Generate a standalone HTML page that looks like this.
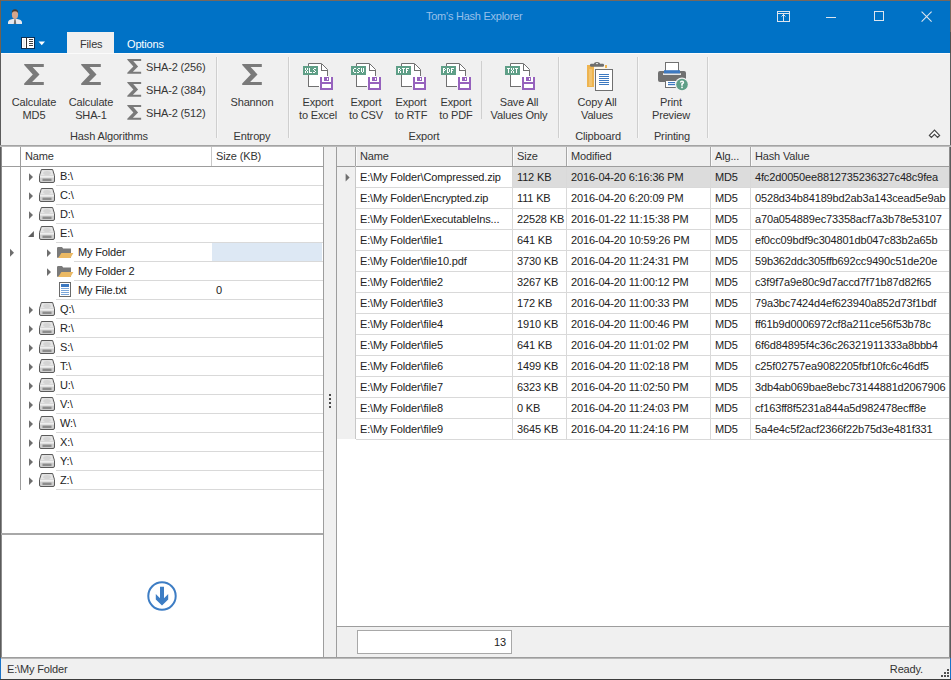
<!DOCTYPE html>
<html><head><meta charset="utf-8"><style>
*{margin:0;padding:0;box-sizing:border-box}
html,body{width:951px;height:680px;overflow:hidden;background:#f0f0f0}
body{position:relative;font-family:"Liberation Sans",sans-serif;font-size:11px;color:#222;line-height:13px}
.a{position:absolute}
.t{position:absolute;white-space:nowrap;letter-spacing:-0.15px}
</style></head><body>
<div class="a" style="left:0px;top:0px;width:951px;height:53px;background:#0072c6;"></div>
<div class="a" style="left:0px;top:0px;width:951px;height:1px;background:#76675c;"></div>
<div class="a" style="left:0px;top:0px;width:1px;height:53px;background:#73614f;"></div>
<div class="a" style="left:950px;top:0px;width:1px;height:32px;background:#76675c;"></div>
<div class="a" style="left:950px;top:32px;width:1px;height:21px;background:#4f4f4f;"></div>
<svg class="a" style="left:6px;top:7px" width="18" height="18" viewBox="0 0 18 18"><path d="M2 17 V14.8 Q2.6 12.6 6.6 11.9 H11.4 Q15.4 12.6 16 14.8 V17Z" fill="#e6e8ee"/><path d="M8.3 12.2 H9.7 L10.2 17 H7.8Z" fill="#707070"/><ellipse cx="9" cy="7.4" rx="3.1" ry="4.5" fill="#d6a68c"/><path d="M5.8 6.2 Q5.6 2.3 9 2.3 Q12.4 2.3 12.2 6.2 Q11.6 4.3 9 4.3 Q6.4 4.3 5.8 6.2Z" fill="#4a3a30"/></svg>
<div class="t" style="left:426px;top:10px;color:#98c0ea;letter-spacing:-0.25px;">Tom's Hash Explorer</div>
<svg class="a" style="left:777px;top:11px" width="14" height="12" viewBox="0 0 14 12" shape-rendering="crispEdges"><rect x="0.5" y="0.5" width="12" height="10" fill="none" stroke="#dde5ee"/><line x1="1" y1="2.5" x2="12" y2="2.5" stroke="#dde5ee"/><line x1="6.5" y1="3" x2="6.5" y2="11" stroke="#dde5ee"/><path d="M4.5 5.5 L6.5 3.5 L8.5 5.5" fill="none" stroke="#dde5ee" shape-rendering="auto"/></svg>
<div class="a" style="left:826px;top:17px;width:10px;height:1px;background:#dde5ee;"></div>
<svg class="a" style="left:874px;top:11px" width="10" height="10" viewBox="0 0 10 10" shape-rendering="crispEdges"><rect x="0.5" y="0.5" width="9" height="9" fill="none" stroke="#dde5ee"/></svg>
<svg class="a" style="left:921px;top:11px" width="12" height="12" viewBox="0 0 12 12"><path d="M0.6 0.6 L10.6 10.6 M10.6 0.6 L0.6 10.6" stroke="#dde5ee" stroke-width="1.1"/></svg>
<svg class="a" style="left:20px;top:36px" width="16" height="14" viewBox="0 0 16 14" shape-rendering="crispEdges"><rect x="1" y="1" width="14" height="12" rx="1.5" fill="#0a2f55"/><rect x="1.6" y="1.6" width="12.8" height="10.8" rx="1" fill="#ffffff"/><rect x="3" y="3" width="2" height="8" fill="#ececec"/><rect x="6" y="1" width="1" height="12" fill="#333"/><rect x="9" y="3" width="4" height="1" fill="#444"/><rect x="9" y="5" width="4" height="1" fill="#444"/><rect x="9" y="7" width="4" height="1" fill="#444"/><rect x="9" y="9" width="4" height="1" fill="#444"/></svg>
<svg class="a" style="left:38px;top:41px" width="8" height="5" viewBox="0 0 8 5"><path d="M0.5 0.5 L7 0.5 L3.75 4.2Z" fill="#fff"/></svg>
<div class="a" style="left:67px;top:32px;width:47px;height:21px;background:#f0f0f0;"></div>
<div class="t" style="left:80px;top:38px;color:#363636;">Files</div>
<div class="t" style="left:127px;top:38px;color:#ffffff;">Options</div>
<div class="a" style="left:0px;top:53px;width:951px;height:92px;background:#f0f0f0;"></div>
<div class="a" style="left:1px;top:53px;width:949px;height:1px;background:#fbfbfb;"></div>
<div class="a" style="left:0px;top:53px;width:1px;height:627px;background:#5b5b5b;"></div>
<div class="a" style="left:950px;top:53px;width:1px;height:605px;background:#5b5b5b;"></div>
<div class="a" style="left:0px;top:145px;width:951px;height:1px;background:#a4a4a4;"></div>
<div class="a" style="left:0px;top:146px;width:951px;height:1px;background:#bcbcbc;"></div>
<svg class="a" style="left:24px;top:64px" width="20" height="21" viewBox="-0.2 0 20 21"><path d="M0 0 H19.6 V3 H8.4 L15.3 10.5 L7.9 18 H19.6 V21 H0 V19.4 L8.6 10.5 L0 0.9Z" fill="#7a7a7a"/></svg>
<svg class="a" style="left:81px;top:64px" width="20" height="21" viewBox="-0.2 0 20 21"><path d="M0 0 H19.6 V3 H8.4 L15.3 10.5 L7.9 18 H19.6 V21 H0 V19.4 L8.6 10.5 L0 0.9Z" fill="#7a7a7a"/></svg>
<div class="t" style="left:-66px;top:96px;width:200px;text-align:center;color:#363636;">Calculate</div>
<div class="t" style="left:-66px;top:109px;width:200px;text-align:center;color:#363636;">MD5</div>
<div class="t" style="left:-9px;top:96px;width:200px;text-align:center;color:#363636;">Calculate</div>
<div class="t" style="left:-9px;top:109px;width:200px;text-align:center;color:#363636;">SHA-1</div>
<svg class="a" style="left:127px;top:59px" width="15" height="16" viewBox="-0.2 0 20.8 22.6"><path d="M0 0 H19.6 V3 H8.4 L15.3 10.5 L7.9 18 H19.6 V21 H0 V19.4 L8.6 10.5 L0 0.9Z" fill="#7a7a7a"/></svg>
<svg class="a" style="left:127px;top:82px" width="15" height="16" viewBox="-0.2 0 20.8 22.6"><path d="M0 0 H19.6 V3 H8.4 L15.3 10.5 L7.9 18 H19.6 V21 H0 V19.4 L8.6 10.5 L0 0.9Z" fill="#7a7a7a"/></svg>
<svg class="a" style="left:127px;top:105px" width="15" height="16" viewBox="-0.2 0 20.8 22.6"><path d="M0 0 H19.6 V3 H8.4 L15.3 10.5 L7.9 18 H19.6 V21 H0 V19.4 L8.6 10.5 L0 0.9Z" fill="#7a7a7a"/></svg>
<div class="t" style="left:146px;top:61px;color:#363636;">SHA-2 (256)</div>
<div class="t" style="left:146px;top:84px;color:#363636;">SHA-2 (384)</div>
<div class="t" style="left:146px;top:107px;color:#363636;">SHA-2 (512)</div>
<div class="t" style="left:9px;top:130px;width:200px;text-align:center;color:#363636;">Hash Algorithms</div>
<div class="a" style="left:216px;top:57px;width:1px;height:81px;background:#cfcfcf;"></div>
<div class="a" style="left:217px;top:57px;width:1px;height:81px;background:#f7f7f7;"></div>
<svg class="a" style="left:242px;top:64px" width="20" height="21" viewBox="-0.2 0 20 21"><path d="M0 0 H19.6 V3 H8.4 L15.3 10.5 L7.9 18 H19.6 V21 H0 V19.4 L8.6 10.5 L0 0.9Z" fill="#7a7a7a"/></svg>
<div class="t" style="left:152px;top:96px;width:200px;text-align:center;color:#363636;">Shannon</div>
<div class="t" style="left:152px;top:130px;width:200px;text-align:center;color:#363636;">Entropy</div>
<div class="a" style="left:288px;top:57px;width:1px;height:81px;background:#cfcfcf;"></div>
<div class="a" style="left:289px;top:57px;width:1px;height:81px;background:#f7f7f7;"></div>
<svg class="a" style="left:298px;top:60px" width="40" height="32" viewBox="0 0 40 32" shape-rendering="crispEdges"><path d="M10 3.5 H23 L29.5 10 V29" fill="#fff" stroke="none"/><rect x="10" y="3" width="13" height="24" fill="#fff"/><rect x="10" y="10" width="20" height="17" fill="#fff"/><path d="M23 3 L30 10 H23Z" fill="#fff"/><path d="M10.5 6 V3.5 H23.5 L29.5 9.5 V16" fill="none" stroke="#707070" stroke-width="1" shape-rendering="auto"/><path d="M23.5 3.5 V10.5 H29.5" fill="none" stroke="#707070"/><path d="M10.5 15 V26.5 H21" fill="none" stroke="#707070"/><rect x="5" y="6" width="15" height="9" fill="#5f9f87"/><rect x="22" y="17" width="13" height="13" fill="#9662bd"/><rect x="24" y="17" width="9" height="5" fill="#fff"/><rect x="26" y="17" width="5" height="4" fill="#9662bd"/><rect x="29" y="18" width="1" height="2" fill="#fff"/><rect x="24" y="24" width="9" height="4" fill="#fff"/></svg>
<svg class="a" style="left:303px;top:66px" width="15" height="9" viewBox="0 0 15 9" shape-rendering="crispEdges"><g fill="#fff"><rect x="2" y="2" width="1" height="1"/><rect x="4" y="2" width="1" height="1"/><rect x="2" y="3" width="1" height="1"/><rect x="4" y="3" width="1" height="1"/><rect x="3" y="4" width="1" height="1"/><rect x="2" y="5" width="1" height="1"/><rect x="4" y="5" width="1" height="1"/><rect x="2" y="6" width="1" height="1"/><rect x="4" y="6" width="1" height="1"/><rect x="6" y="2" width="1" height="1"/><rect x="6" y="3" width="1" height="1"/><rect x="6" y="4" width="1" height="1"/><rect x="6" y="5" width="1" height="1"/><rect x="6" y="6" width="1" height="1"/><rect x="7" y="6" width="1" height="1"/><rect x="8" y="6" width="1" height="1"/><rect x="11" y="2" width="1" height="1"/><rect x="12" y="2" width="1" height="1"/><rect x="10" y="3" width="1" height="1"/><rect x="11" y="4" width="1" height="1"/><rect x="12" y="5" width="1" height="1"/><rect x="10" y="6" width="1" height="1"/><rect x="11" y="6" width="1" height="1"/></g></svg>
<svg class="a" style="left:346px;top:60px" width="40" height="32" viewBox="0 0 40 32" shape-rendering="crispEdges"><path d="M10 3.5 H23 L29.5 10 V29" fill="#fff" stroke="none"/><rect x="10" y="3" width="13" height="24" fill="#fff"/><rect x="10" y="10" width="20" height="17" fill="#fff"/><path d="M23 3 L30 10 H23Z" fill="#fff"/><path d="M10.5 6 V3.5 H23.5 L29.5 9.5 V16" fill="none" stroke="#707070" stroke-width="1" shape-rendering="auto"/><path d="M23.5 3.5 V10.5 H29.5" fill="none" stroke="#707070"/><path d="M10.5 15 V26.5 H21" fill="none" stroke="#707070"/><rect x="5" y="6" width="15" height="9" fill="#5f9f87"/><rect x="22" y="17" width="13" height="13" fill="#9662bd"/><rect x="24" y="17" width="9" height="5" fill="#fff"/><rect x="26" y="17" width="5" height="4" fill="#9662bd"/><rect x="29" y="18" width="1" height="2" fill="#fff"/><rect x="24" y="24" width="9" height="4" fill="#fff"/></svg>
<svg class="a" style="left:351px;top:66px" width="15" height="9" viewBox="0 0 15 9" shape-rendering="crispEdges"><g fill="#fff"><rect x="3" y="2" width="1" height="1"/><rect x="4" y="2" width="1" height="1"/><rect x="2" y="3" width="1" height="1"/><rect x="2" y="4" width="1" height="1"/><rect x="2" y="5" width="1" height="1"/><rect x="3" y="6" width="1" height="1"/><rect x="4" y="6" width="1" height="1"/><rect x="7" y="2" width="1" height="1"/><rect x="8" y="2" width="1" height="1"/><rect x="6" y="3" width="1" height="1"/><rect x="7" y="4" width="1" height="1"/><rect x="8" y="5" width="1" height="1"/><rect x="6" y="6" width="1" height="1"/><rect x="7" y="6" width="1" height="1"/><rect x="10" y="2" width="1" height="1"/><rect x="12" y="2" width="1" height="1"/><rect x="10" y="3" width="1" height="1"/><rect x="12" y="3" width="1" height="1"/><rect x="10" y="4" width="1" height="1"/><rect x="12" y="4" width="1" height="1"/><rect x="10" y="5" width="1" height="1"/><rect x="12" y="5" width="1" height="1"/><rect x="11" y="6" width="1" height="1"/></g></svg>
<svg class="a" style="left:391px;top:60px" width="40" height="32" viewBox="0 0 40 32" shape-rendering="crispEdges"><path d="M10 3.5 H23 L29.5 10 V29" fill="#fff" stroke="none"/><rect x="10" y="3" width="13" height="24" fill="#fff"/><rect x="10" y="10" width="20" height="17" fill="#fff"/><path d="M23 3 L30 10 H23Z" fill="#fff"/><path d="M10.5 6 V3.5 H23.5 L29.5 9.5 V16" fill="none" stroke="#707070" stroke-width="1" shape-rendering="auto"/><path d="M23.5 3.5 V10.5 H29.5" fill="none" stroke="#707070"/><path d="M10.5 15 V26.5 H21" fill="none" stroke="#707070"/><rect x="5" y="6" width="15" height="9" fill="#5f9f87"/><rect x="22" y="17" width="13" height="13" fill="#9662bd"/><rect x="24" y="17" width="9" height="5" fill="#fff"/><rect x="26" y="17" width="5" height="4" fill="#9662bd"/><rect x="29" y="18" width="1" height="2" fill="#fff"/><rect x="24" y="24" width="9" height="4" fill="#fff"/></svg>
<svg class="a" style="left:396px;top:66px" width="15" height="9" viewBox="0 0 15 9" shape-rendering="crispEdges"><g fill="#fff"><rect x="2" y="2" width="1" height="1"/><rect x="3" y="2" width="1" height="1"/><rect x="2" y="3" width="1" height="1"/><rect x="4" y="3" width="1" height="1"/><rect x="2" y="4" width="1" height="1"/><rect x="3" y="4" width="1" height="1"/><rect x="2" y="5" width="1" height="1"/><rect x="4" y="5" width="1" height="1"/><rect x="2" y="6" width="1" height="1"/><rect x="4" y="6" width="1" height="1"/><rect x="6" y="2" width="1" height="1"/><rect x="7" y="2" width="1" height="1"/><rect x="8" y="2" width="1" height="1"/><rect x="7" y="3" width="1" height="1"/><rect x="7" y="4" width="1" height="1"/><rect x="7" y="5" width="1" height="1"/><rect x="7" y="6" width="1" height="1"/><rect x="10" y="2" width="1" height="1"/><rect x="11" y="2" width="1" height="1"/><rect x="12" y="2" width="1" height="1"/><rect x="10" y="3" width="1" height="1"/><rect x="10" y="4" width="1" height="1"/><rect x="11" y="4" width="1" height="1"/><rect x="10" y="5" width="1" height="1"/><rect x="10" y="6" width="1" height="1"/></g></svg>
<svg class="a" style="left:436px;top:60px" width="40" height="32" viewBox="0 0 40 32" shape-rendering="crispEdges"><path d="M10 3.5 H23 L29.5 10 V29" fill="#fff" stroke="none"/><rect x="10" y="3" width="13" height="24" fill="#fff"/><rect x="10" y="10" width="20" height="17" fill="#fff"/><path d="M23 3 L30 10 H23Z" fill="#fff"/><path d="M10.5 6 V3.5 H23.5 L29.5 9.5 V16" fill="none" stroke="#707070" stroke-width="1" shape-rendering="auto"/><path d="M23.5 3.5 V10.5 H29.5" fill="none" stroke="#707070"/><path d="M10.5 15 V26.5 H21" fill="none" stroke="#707070"/><rect x="5" y="6" width="15" height="9" fill="#5f9f87"/><rect x="22" y="17" width="13" height="13" fill="#9662bd"/><rect x="24" y="17" width="9" height="5" fill="#fff"/><rect x="26" y="17" width="5" height="4" fill="#9662bd"/><rect x="29" y="18" width="1" height="2" fill="#fff"/><rect x="24" y="24" width="9" height="4" fill="#fff"/></svg>
<svg class="a" style="left:441px;top:66px" width="15" height="9" viewBox="0 0 15 9" shape-rendering="crispEdges"><g fill="#fff"><rect x="2" y="2" width="1" height="1"/><rect x="3" y="2" width="1" height="1"/><rect x="2" y="3" width="1" height="1"/><rect x="4" y="3" width="1" height="1"/><rect x="2" y="4" width="1" height="1"/><rect x="3" y="4" width="1" height="1"/><rect x="2" y="5" width="1" height="1"/><rect x="2" y="6" width="1" height="1"/><rect x="6" y="2" width="1" height="1"/><rect x="7" y="2" width="1" height="1"/><rect x="6" y="3" width="1" height="1"/><rect x="8" y="3" width="1" height="1"/><rect x="6" y="4" width="1" height="1"/><rect x="8" y="4" width="1" height="1"/><rect x="6" y="5" width="1" height="1"/><rect x="8" y="5" width="1" height="1"/><rect x="6" y="6" width="1" height="1"/><rect x="7" y="6" width="1" height="1"/><rect x="10" y="2" width="1" height="1"/><rect x="11" y="2" width="1" height="1"/><rect x="12" y="2" width="1" height="1"/><rect x="10" y="3" width="1" height="1"/><rect x="10" y="4" width="1" height="1"/><rect x="11" y="4" width="1" height="1"/><rect x="10" y="5" width="1" height="1"/><rect x="10" y="6" width="1" height="1"/></g></svg>
<svg class="a" style="left:500px;top:60px" width="40" height="32" viewBox="0 0 40 32" shape-rendering="crispEdges"><path d="M10 3.5 H23 L29.5 10 V29" fill="#fff" stroke="none"/><rect x="10" y="3" width="13" height="24" fill="#fff"/><rect x="10" y="10" width="20" height="17" fill="#fff"/><path d="M23 3 L30 10 H23Z" fill="#fff"/><path d="M10.5 6 V3.5 H23.5 L29.5 9.5 V16" fill="none" stroke="#707070" stroke-width="1" shape-rendering="auto"/><path d="M23.5 3.5 V10.5 H29.5" fill="none" stroke="#707070"/><path d="M10.5 15 V26.5 H21" fill="none" stroke="#707070"/><rect x="5" y="6" width="15" height="9" fill="#5f9f87"/><rect x="22" y="17" width="13" height="13" fill="#9662bd"/><rect x="24" y="17" width="9" height="5" fill="#fff"/><rect x="26" y="17" width="5" height="4" fill="#9662bd"/><rect x="29" y="18" width="1" height="2" fill="#fff"/><rect x="24" y="24" width="9" height="4" fill="#fff"/></svg>
<svg class="a" style="left:505px;top:66px" width="15" height="9" viewBox="0 0 15 9" shape-rendering="crispEdges"><g fill="#fff"><rect x="2" y="2" width="1" height="1"/><rect x="3" y="2" width="1" height="1"/><rect x="4" y="2" width="1" height="1"/><rect x="3" y="3" width="1" height="1"/><rect x="3" y="4" width="1" height="1"/><rect x="3" y="5" width="1" height="1"/><rect x="3" y="6" width="1" height="1"/><rect x="6" y="2" width="1" height="1"/><rect x="8" y="2" width="1" height="1"/><rect x="6" y="3" width="1" height="1"/><rect x="8" y="3" width="1" height="1"/><rect x="7" y="4" width="1" height="1"/><rect x="6" y="5" width="1" height="1"/><rect x="8" y="5" width="1" height="1"/><rect x="6" y="6" width="1" height="1"/><rect x="8" y="6" width="1" height="1"/><rect x="10" y="2" width="1" height="1"/><rect x="11" y="2" width="1" height="1"/><rect x="12" y="2" width="1" height="1"/><rect x="11" y="3" width="1" height="1"/><rect x="11" y="4" width="1" height="1"/><rect x="11" y="5" width="1" height="1"/><rect x="11" y="6" width="1" height="1"/></g></svg>
<div class="t" style="left:218px;top:96px;width:200px;text-align:center;color:#363636;">Export</div>
<div class="t" style="left:218px;top:109px;width:200px;text-align:center;color:#363636;">to Excel</div>
<div class="t" style="left:266px;top:96px;width:200px;text-align:center;color:#363636;">Export</div>
<div class="t" style="left:266px;top:109px;width:200px;text-align:center;color:#363636;">to CSV</div>
<div class="t" style="left:311px;top:96px;width:200px;text-align:center;color:#363636;">Export</div>
<div class="t" style="left:311px;top:109px;width:200px;text-align:center;color:#363636;">to RTF</div>
<div class="t" style="left:356px;top:96px;width:200px;text-align:center;color:#363636;">Export</div>
<div class="t" style="left:356px;top:109px;width:200px;text-align:center;color:#363636;">to PDF</div>
<div class="a" style="left:481px;top:61px;width:1px;height:58px;background:#cfcfcf;"></div>
<div class="t" style="left:419px;top:96px;width:200px;text-align:center;color:#363636;">Save All</div>
<div class="t" style="left:419px;top:109px;width:200px;text-align:center;color:#363636;">Values Only</div>
<div class="t" style="left:324px;top:130px;width:200px;text-align:center;color:#363636;">Export</div>
<div class="a" style="left:558px;top:57px;width:1px;height:81px;background:#cfcfcf;"></div>
<div class="a" style="left:559px;top:57px;width:1px;height:81px;background:#f7f7f7;"></div>
<svg class="a" style="left:585px;top:60px" width="30" height="33" viewBox="0 0 30 33"><rect x="2" y="5" width="7" height="22" fill="#eeb450"/><rect x="4" y="9" width="3" height="17" fill="#f2c470"/><rect x="20" y="5" width="2" height="3" fill="#eeb450"/><rect x="9" y="6" width="11" height="3" fill="#fbf6ec"/><rect x="5" y="3.8" width="14" height="3" rx="1.3" fill="#6e6e6e"/><path d="M9 4 Q9 2 12 2 Q15 2 15 4Z" fill="#6e6e6e"/><ellipse cx="12" cy="3.6" rx="1.2" ry="0.7" fill="#f0f0f0"/><rect x="10" y="9" width="18" height="22" fill="#fff"/><rect x="10.5" y="9.5" width="17" height="21" fill="none" stroke="#707070"/><g shape-rendering="crispEdges"><rect x="14" y="14" width="10" height="1" fill="#3d79c1"/><rect x="14" y="16" width="10" height="1" fill="#3d79c1"/><rect x="14" y="18" width="10" height="1" fill="#3d79c1"/><rect x="14" y="20" width="10" height="1" fill="#3d79c1"/><rect x="14" y="22" width="10" height="1" fill="#3d79c1"/><rect x="14" y="24" width="10" height="1" fill="#3d79c1"/></g></svg>
<div class="t" style="left:497px;top:96px;width:200px;text-align:center;color:#363636;">Copy All</div>
<div class="t" style="left:497px;top:109px;width:200px;text-align:center;color:#363636;">Values</div>
<div class="t" style="left:498px;top:130px;width:200px;text-align:center;color:#363636;">Clipboard</div>
<div class="a" style="left:637px;top:57px;width:1px;height:81px;background:#cfcfcf;"></div>
<div class="a" style="left:638px;top:57px;width:1px;height:81px;background:#f7f7f7;"></div>
<svg class="a" style="left:656px;top:60px" width="34" height="32" viewBox="0 0 34 32"><rect x="9.5" y="2.5" width="13" height="10" fill="#fff" stroke="#707070"/><rect x="2" y="11" width="28" height="11" rx="2" fill="#707070"/><rect x="7" y="13.3" width="18" height="1.6" fill="#f4f4f4"/><rect x="8" y="10.2" width="16" height="3.2" fill="#3d79c1"/><rect x="9.5" y="20.5" width="11" height="7" fill="#fff" stroke="#707070"/><rect x="12" y="22" width="7" height="1.2" fill="#3d79c1"/><rect x="12" y="24" width="7" height="1.2" fill="#3d79c1"/><circle cx="26" cy="24.5" r="7" fill="#f0f0f0"/><circle cx="26" cy="24.5" r="5.8" fill="#5f9f87"/><path d="M23.8 22.6 Q23.8 20.4 26 20.4 Q28.2 20.4 28.2 22.4 Q28.2 23.6 26.8 24.3 L26.8 25.8 H25.2 V23.6 Q26.6 23 26.6 22.4 Q26.6 21.8 26 21.8 Q25.4 21.8 25.4 22.6Z" fill="#fff"/><rect x="25.2" y="26.6" width="1.6" height="1.6" fill="#fff"/></svg>
<div class="t" style="left:571px;top:96px;width:200px;text-align:center;color:#363636;">Print</div>
<div class="t" style="left:571px;top:109px;width:200px;text-align:center;color:#363636;">Preview</div>
<div class="t" style="left:572px;top:130px;width:200px;text-align:center;color:#363636;">Printing</div>
<div class="a" style="left:707px;top:57px;width:1px;height:81px;background:#cfcfcf;"></div>
<div class="a" style="left:708px;top:57px;width:1px;height:81px;background:#f7f7f7;"></div>
<svg class="a" style="left:928px;top:129px" width="13" height="10" viewBox="0 0 13 10"><path d="M1.4 6.4 L6.5 1.2 L11.6 6.4 L9.6 8.5 L6.5 5.3 L3.4 8.5Z" fill="#fff" stroke="#454545" stroke-width="1.2"/></svg>
<div class="a" style="left:1px;top:147px;width:322px;height:510px;background:#ffffff;"></div>
<div class="a" style="left:1px;top:147px;width:1px;height:510px;background:#8c8c8c;"></div>
<div class="a" style="left:323px;top:147px;width:1px;height:510px;background:#9d9d9d;"></div>
<div class="a" style="left:1px;top:657px;width:323px;height:1px;background:#9d9d9d;"></div>
<div class="a" style="left:1px;top:533px;width:322px;height:2px;background:#a8a8a8;"></div>
<div class="a" style="left:2px;top:166px;width:321px;height:1px;background:#9d9d9d;"></div>
<div class="a" style="left:20px;top:147px;width:1px;height:343px;background:#9d9d9d;"></div>
<div class="a" style="left:211px;top:147px;width:1px;height:19px;background:#c8c8c8;"></div>
<div class="t" style="left:25px;top:150px;color:#333;">Name</div>
<div class="t" style="left:216px;top:150px;color:#333;">Size (KB)</div>
<svg class="a" style="left:28px;top:173px" width="6" height="9" viewBox="0 0 6 9"><path d="M1 0.2 L5 4.1 L1 8Z" fill="#6e6e6e"/></svg>
<svg class="a" style="left:39px;top:169px" width="16" height="14" viewBox="0 0 16 14"><path d="M2.4 0.5 H13.6 L15.5 6.6 V12 Q15.5 13.5 14 13.5 H2 Q0.5 13.5 0.5 12 V6.6Z" fill="#cdcdcd" stroke="#5a5a5a" stroke-width="1"/><path d="M3 1.3 H13 L14.6 6.6 H1.4Z" fill="#e6e6e6"/><ellipse cx="8" cy="3.9" rx="3.8" ry="2" fill="#d4d4d4"/><rect x="1" y="7.2" width="14" height="1.3" fill="#f8f8f8"/><rect x="3.5" y="9.6" width="9" height="2.4" fill="#8c8c8c"/></svg>
<div class="t" style="left:60px;top:170px;color:#222;">B:\</div>
<div class="a" style="left:56px;top:185px;width:267px;height:1px;background:#d9d9d9;"></div>
<svg class="a" style="left:28px;top:192px" width="6" height="9" viewBox="0 0 6 9"><path d="M1 0.2 L5 4.1 L1 8Z" fill="#6e6e6e"/></svg>
<svg class="a" style="left:39px;top:188px" width="16" height="14" viewBox="0 0 16 14"><path d="M2.4 0.5 H13.6 L15.5 6.6 V12 Q15.5 13.5 14 13.5 H2 Q0.5 13.5 0.5 12 V6.6Z" fill="#cdcdcd" stroke="#5a5a5a" stroke-width="1"/><path d="M3 1.3 H13 L14.6 6.6 H1.4Z" fill="#e6e6e6"/><ellipse cx="8" cy="3.9" rx="3.8" ry="2" fill="#d4d4d4"/><rect x="1" y="7.2" width="14" height="1.3" fill="#f8f8f8"/><rect x="3.5" y="9.6" width="9" height="2.4" fill="#8c8c8c"/></svg>
<div class="t" style="left:60px;top:189px;color:#222;">C:\</div>
<div class="a" style="left:56px;top:204px;width:267px;height:1px;background:#d9d9d9;"></div>
<svg class="a" style="left:28px;top:211px" width="6" height="9" viewBox="0 0 6 9"><path d="M1 0.2 L5 4.1 L1 8Z" fill="#6e6e6e"/></svg>
<svg class="a" style="left:39px;top:207px" width="16" height="14" viewBox="0 0 16 14"><path d="M2.4 0.5 H13.6 L15.5 6.6 V12 Q15.5 13.5 14 13.5 H2 Q0.5 13.5 0.5 12 V6.6Z" fill="#cdcdcd" stroke="#5a5a5a" stroke-width="1"/><path d="M3 1.3 H13 L14.6 6.6 H1.4Z" fill="#e6e6e6"/><ellipse cx="8" cy="3.9" rx="3.8" ry="2" fill="#d4d4d4"/><rect x="1" y="7.2" width="14" height="1.3" fill="#f8f8f8"/><rect x="3.5" y="9.6" width="9" height="2.4" fill="#8c8c8c"/></svg>
<div class="t" style="left:60px;top:208px;color:#222;">D:\</div>
<div class="a" style="left:56px;top:223px;width:267px;height:1px;background:#d9d9d9;"></div>
<svg class="a" style="left:28px;top:231px" width="7" height="7" viewBox="0 0 7 7"><path d="M5.9 0 V5.9 H0Z" fill="#5e5e5e"/></svg>
<svg class="a" style="left:39px;top:226px" width="16" height="14" viewBox="0 0 16 14"><path d="M2.4 0.5 H13.6 L15.5 6.6 V12 Q15.5 13.5 14 13.5 H2 Q0.5 13.5 0.5 12 V6.6Z" fill="#cdcdcd" stroke="#5a5a5a" stroke-width="1"/><path d="M3 1.3 H13 L14.6 6.6 H1.4Z" fill="#e6e6e6"/><ellipse cx="8" cy="3.9" rx="3.8" ry="2" fill="#d4d4d4"/><rect x="1" y="7.2" width="14" height="1.3" fill="#f8f8f8"/><rect x="3.5" y="9.6" width="9" height="2.4" fill="#8c8c8c"/></svg>
<div class="t" style="left:60px;top:227px;color:#222;">E:\</div>
<div class="a" style="left:56px;top:242px;width:267px;height:1px;background:#d9d9d9;"></div>
<div class="a" style="left:212px;top:243px;width:110px;height:18px;background:#dde8f4;"></div>
<svg class="a" style="left:10px;top:248px" width="6" height="9" viewBox="0 0 6 9"><path d="M0 0.8 L4 4.8 L0 8.8Z" fill="#6e6e6e"/></svg>
<svg class="a" style="left:46px;top:249px" width="6" height="9" viewBox="0 0 6 9"><path d="M1 0.2 L5 4.1 L1 8Z" fill="#6e6e6e"/></svg>
<svg class="a" style="left:57px;top:247px" width="17" height="12" viewBox="0 0 17 12"><path d="M0 1.2 Q0 0 1.2 0 H5 L6.2 1.6 H14 V10.8 H0Z" fill="#7a7a7a"/><path d="M1.2 11 L4.4 6 H16.4 L13.4 11Z" fill="#ebb963"/></svg>
<div class="t" style="left:78px;top:246px;color:#222;">My Folder</div>
<div class="a" style="left:74px;top:261px;width:249px;height:1px;background:#d9d9d9;"></div>
<svg class="a" style="left:46px;top:268px" width="6" height="9" viewBox="0 0 6 9"><path d="M1 0.2 L5 4.1 L1 8Z" fill="#6e6e6e"/></svg>
<svg class="a" style="left:57px;top:266px" width="17" height="12" viewBox="0 0 17 12"><path d="M0 1.2 Q0 0 1.2 0 H5 L6.2 1.6 H14 V10.8 H0Z" fill="#7a7a7a"/><path d="M1.2 11 L4.4 6 H16.4 L13.4 11Z" fill="#ebb963"/></svg>
<div class="t" style="left:78px;top:265px;color:#222;">My Folder 2</div>
<div class="a" style="left:74px;top:280px;width:249px;height:1px;background:#d9d9d9;"></div>
<svg class="a" style="left:59px;top:282px" width="12" height="15" viewBox="0 0 12 15" shape-rendering="crispEdges"><rect x="0.5" y="0.5" width="11" height="14" fill="#fff" stroke="#6a6a6a"/><rect x="2" y="2" width="8" height="3" fill="#3c78c0"/><rect x="2" y="6" width="8" height="1" fill="#7aa6d9"/><rect x="2" y="8" width="8" height="1" fill="#7aa6d9"/><rect x="2" y="10" width="8" height="1" fill="#7aa6d9"/><rect x="2" y="12" width="8" height="1" fill="#7aa6d9"/></svg>
<div class="t" style="left:78px;top:284px;color:#222;">My File.txt</div>
<div class="t" style="left:216px;top:284px;color:#222;">0</div>
<div class="a" style="left:56px;top:299px;width:267px;height:1px;background:#d9d9d9;"></div>
<svg class="a" style="left:28px;top:306px" width="6" height="9" viewBox="0 0 6 9"><path d="M1 0.2 L5 4.1 L1 8Z" fill="#6e6e6e"/></svg>
<svg class="a" style="left:39px;top:302px" width="16" height="14" viewBox="0 0 16 14"><path d="M2.4 0.5 H13.6 L15.5 6.6 V12 Q15.5 13.5 14 13.5 H2 Q0.5 13.5 0.5 12 V6.6Z" fill="#cdcdcd" stroke="#5a5a5a" stroke-width="1"/><path d="M3 1.3 H13 L14.6 6.6 H1.4Z" fill="#e6e6e6"/><ellipse cx="8" cy="3.9" rx="3.8" ry="2" fill="#d4d4d4"/><rect x="1" y="7.2" width="14" height="1.3" fill="#f8f8f8"/><rect x="3.5" y="9.6" width="9" height="2.4" fill="#8c8c8c"/></svg>
<div class="t" style="left:60px;top:303px;color:#222;">Q:\</div>
<div class="a" style="left:56px;top:318px;width:267px;height:1px;background:#d9d9d9;"></div>
<svg class="a" style="left:28px;top:325px" width="6" height="9" viewBox="0 0 6 9"><path d="M1 0.2 L5 4.1 L1 8Z" fill="#6e6e6e"/></svg>
<svg class="a" style="left:39px;top:321px" width="16" height="14" viewBox="0 0 16 14"><path d="M2.4 0.5 H13.6 L15.5 6.6 V12 Q15.5 13.5 14 13.5 H2 Q0.5 13.5 0.5 12 V6.6Z" fill="#cdcdcd" stroke="#5a5a5a" stroke-width="1"/><path d="M3 1.3 H13 L14.6 6.6 H1.4Z" fill="#e6e6e6"/><ellipse cx="8" cy="3.9" rx="3.8" ry="2" fill="#d4d4d4"/><rect x="1" y="7.2" width="14" height="1.3" fill="#f8f8f8"/><rect x="3.5" y="9.6" width="9" height="2.4" fill="#8c8c8c"/></svg>
<div class="t" style="left:60px;top:322px;color:#222;">R:\</div>
<div class="a" style="left:56px;top:337px;width:267px;height:1px;background:#d9d9d9;"></div>
<svg class="a" style="left:28px;top:344px" width="6" height="9" viewBox="0 0 6 9"><path d="M1 0.2 L5 4.1 L1 8Z" fill="#6e6e6e"/></svg>
<svg class="a" style="left:39px;top:340px" width="16" height="14" viewBox="0 0 16 14"><path d="M2.4 0.5 H13.6 L15.5 6.6 V12 Q15.5 13.5 14 13.5 H2 Q0.5 13.5 0.5 12 V6.6Z" fill="#cdcdcd" stroke="#5a5a5a" stroke-width="1"/><path d="M3 1.3 H13 L14.6 6.6 H1.4Z" fill="#e6e6e6"/><ellipse cx="8" cy="3.9" rx="3.8" ry="2" fill="#d4d4d4"/><rect x="1" y="7.2" width="14" height="1.3" fill="#f8f8f8"/><rect x="3.5" y="9.6" width="9" height="2.4" fill="#8c8c8c"/></svg>
<div class="t" style="left:60px;top:341px;color:#222;">S:\</div>
<div class="a" style="left:56px;top:356px;width:267px;height:1px;background:#d9d9d9;"></div>
<svg class="a" style="left:28px;top:363px" width="6" height="9" viewBox="0 0 6 9"><path d="M1 0.2 L5 4.1 L1 8Z" fill="#6e6e6e"/></svg>
<svg class="a" style="left:39px;top:359px" width="16" height="14" viewBox="0 0 16 14"><path d="M2.4 0.5 H13.6 L15.5 6.6 V12 Q15.5 13.5 14 13.5 H2 Q0.5 13.5 0.5 12 V6.6Z" fill="#cdcdcd" stroke="#5a5a5a" stroke-width="1"/><path d="M3 1.3 H13 L14.6 6.6 H1.4Z" fill="#e6e6e6"/><ellipse cx="8" cy="3.9" rx="3.8" ry="2" fill="#d4d4d4"/><rect x="1" y="7.2" width="14" height="1.3" fill="#f8f8f8"/><rect x="3.5" y="9.6" width="9" height="2.4" fill="#8c8c8c"/></svg>
<div class="t" style="left:60px;top:360px;color:#222;">T:\</div>
<div class="a" style="left:56px;top:375px;width:267px;height:1px;background:#d9d9d9;"></div>
<svg class="a" style="left:28px;top:382px" width="6" height="9" viewBox="0 0 6 9"><path d="M1 0.2 L5 4.1 L1 8Z" fill="#6e6e6e"/></svg>
<svg class="a" style="left:39px;top:378px" width="16" height="14" viewBox="0 0 16 14"><path d="M2.4 0.5 H13.6 L15.5 6.6 V12 Q15.5 13.5 14 13.5 H2 Q0.5 13.5 0.5 12 V6.6Z" fill="#cdcdcd" stroke="#5a5a5a" stroke-width="1"/><path d="M3 1.3 H13 L14.6 6.6 H1.4Z" fill="#e6e6e6"/><ellipse cx="8" cy="3.9" rx="3.8" ry="2" fill="#d4d4d4"/><rect x="1" y="7.2" width="14" height="1.3" fill="#f8f8f8"/><rect x="3.5" y="9.6" width="9" height="2.4" fill="#8c8c8c"/></svg>
<div class="t" style="left:60px;top:379px;color:#222;">U:\</div>
<div class="a" style="left:56px;top:394px;width:267px;height:1px;background:#d9d9d9;"></div>
<svg class="a" style="left:28px;top:401px" width="6" height="9" viewBox="0 0 6 9"><path d="M1 0.2 L5 4.1 L1 8Z" fill="#6e6e6e"/></svg>
<svg class="a" style="left:39px;top:397px" width="16" height="14" viewBox="0 0 16 14"><path d="M2.4 0.5 H13.6 L15.5 6.6 V12 Q15.5 13.5 14 13.5 H2 Q0.5 13.5 0.5 12 V6.6Z" fill="#cdcdcd" stroke="#5a5a5a" stroke-width="1"/><path d="M3 1.3 H13 L14.6 6.6 H1.4Z" fill="#e6e6e6"/><ellipse cx="8" cy="3.9" rx="3.8" ry="2" fill="#d4d4d4"/><rect x="1" y="7.2" width="14" height="1.3" fill="#f8f8f8"/><rect x="3.5" y="9.6" width="9" height="2.4" fill="#8c8c8c"/></svg>
<div class="t" style="left:60px;top:398px;color:#222;">V:\</div>
<div class="a" style="left:56px;top:413px;width:267px;height:1px;background:#d9d9d9;"></div>
<svg class="a" style="left:28px;top:420px" width="6" height="9" viewBox="0 0 6 9"><path d="M1 0.2 L5 4.1 L1 8Z" fill="#6e6e6e"/></svg>
<svg class="a" style="left:39px;top:416px" width="16" height="14" viewBox="0 0 16 14"><path d="M2.4 0.5 H13.6 L15.5 6.6 V12 Q15.5 13.5 14 13.5 H2 Q0.5 13.5 0.5 12 V6.6Z" fill="#cdcdcd" stroke="#5a5a5a" stroke-width="1"/><path d="M3 1.3 H13 L14.6 6.6 H1.4Z" fill="#e6e6e6"/><ellipse cx="8" cy="3.9" rx="3.8" ry="2" fill="#d4d4d4"/><rect x="1" y="7.2" width="14" height="1.3" fill="#f8f8f8"/><rect x="3.5" y="9.6" width="9" height="2.4" fill="#8c8c8c"/></svg>
<div class="t" style="left:60px;top:417px;color:#222;">W:\</div>
<div class="a" style="left:56px;top:432px;width:267px;height:1px;background:#d9d9d9;"></div>
<svg class="a" style="left:28px;top:439px" width="6" height="9" viewBox="0 0 6 9"><path d="M1 0.2 L5 4.1 L1 8Z" fill="#6e6e6e"/></svg>
<svg class="a" style="left:39px;top:435px" width="16" height="14" viewBox="0 0 16 14"><path d="M2.4 0.5 H13.6 L15.5 6.6 V12 Q15.5 13.5 14 13.5 H2 Q0.5 13.5 0.5 12 V6.6Z" fill="#cdcdcd" stroke="#5a5a5a" stroke-width="1"/><path d="M3 1.3 H13 L14.6 6.6 H1.4Z" fill="#e6e6e6"/><ellipse cx="8" cy="3.9" rx="3.8" ry="2" fill="#d4d4d4"/><rect x="1" y="7.2" width="14" height="1.3" fill="#f8f8f8"/><rect x="3.5" y="9.6" width="9" height="2.4" fill="#8c8c8c"/></svg>
<div class="t" style="left:60px;top:436px;color:#222;">X:\</div>
<div class="a" style="left:56px;top:451px;width:267px;height:1px;background:#d9d9d9;"></div>
<svg class="a" style="left:28px;top:458px" width="6" height="9" viewBox="0 0 6 9"><path d="M1 0.2 L5 4.1 L1 8Z" fill="#6e6e6e"/></svg>
<svg class="a" style="left:39px;top:454px" width="16" height="14" viewBox="0 0 16 14"><path d="M2.4 0.5 H13.6 L15.5 6.6 V12 Q15.5 13.5 14 13.5 H2 Q0.5 13.5 0.5 12 V6.6Z" fill="#cdcdcd" stroke="#5a5a5a" stroke-width="1"/><path d="M3 1.3 H13 L14.6 6.6 H1.4Z" fill="#e6e6e6"/><ellipse cx="8" cy="3.9" rx="3.8" ry="2" fill="#d4d4d4"/><rect x="1" y="7.2" width="14" height="1.3" fill="#f8f8f8"/><rect x="3.5" y="9.6" width="9" height="2.4" fill="#8c8c8c"/></svg>
<div class="t" style="left:60px;top:455px;color:#222;">Y:\</div>
<div class="a" style="left:56px;top:470px;width:267px;height:1px;background:#d9d9d9;"></div>
<svg class="a" style="left:28px;top:477px" width="6" height="9" viewBox="0 0 6 9"><path d="M1 0.2 L5 4.1 L1 8Z" fill="#6e6e6e"/></svg>
<svg class="a" style="left:39px;top:473px" width="16" height="14" viewBox="0 0 16 14"><path d="M2.4 0.5 H13.6 L15.5 6.6 V12 Q15.5 13.5 14 13.5 H2 Q0.5 13.5 0.5 12 V6.6Z" fill="#cdcdcd" stroke="#5a5a5a" stroke-width="1"/><path d="M3 1.3 H13 L14.6 6.6 H1.4Z" fill="#e6e6e6"/><ellipse cx="8" cy="3.9" rx="3.8" ry="2" fill="#d4d4d4"/><rect x="1" y="7.2" width="14" height="1.3" fill="#f8f8f8"/><rect x="3.5" y="9.6" width="9" height="2.4" fill="#8c8c8c"/></svg>
<div class="t" style="left:60px;top:474px;color:#222;">Z:\</div>
<div class="a" style="left:56px;top:489px;width:267px;height:1px;background:#d9d9d9;"></div>
<svg class="a" style="left:145px;top:579px" width="34" height="34" viewBox="0 0 34 34"><circle cx="17" cy="17" r="13.7" fill="none" stroke="#3d7dc4" stroke-width="2"/><path d="M15 7.8 H19 V19.2 L23.2 15 V20.6 L17 26.6 L10.8 20.6 V15 L15 19.2Z" fill="#3d7dc4"/></svg>
<div class="a" style="left:324px;top:147px;width:12px;height:510px;background:#f0f0f0;"></div>
<div class="a" style="left:329px;top:394px;width:2px;height:2px;background:#4a4a4a;"></div>
<div class="a" style="left:329px;top:398px;width:2px;height:2px;background:#4a4a4a;"></div>
<div class="a" style="left:329px;top:402px;width:2px;height:2px;background:#4a4a4a;"></div>
<div class="a" style="left:329px;top:406px;width:2px;height:2px;background:#4a4a4a;"></div>
<div class="a" style="left:336px;top:147px;width:614px;height:510px;background:#ffffff;"></div>
<div class="a" style="left:336px;top:147px;width:1px;height:510px;background:#9d9d9d;"></div>
<div class="a" style="left:949px;top:147px;width:1px;height:510px;background:#8c8c8c;"></div>
<div class="a" style="left:1px;top:657px;width:949px;height:1px;background:#9d9d9d;"></div>
<div class="a" style="left:337px;top:147px;width:612px;height:19px;background:#efefef;"></div>
<div class="a" style="left:337px;top:166px;width:612px;height:1px;background:#9d9d9d;"></div>
<div class="a" style="left:337px;top:167px;width:18px;height:272px;background:#f0f0f0;"></div>
<div class="a" style="left:355px;top:147px;width:1px;height:19px;background:#a6a6a6;"></div>
<div class="a" style="left:356px;top:147px;width:1px;height:19px;background:#fafafa;"></div>
<div class="a" style="left:355px;top:166px;width:1px;height:273px;background:#c8c8c8;"></div>
<div class="a" style="left:512px;top:147px;width:1px;height:19px;background:#a6a6a6;"></div>
<div class="a" style="left:513px;top:147px;width:1px;height:19px;background:#fafafa;"></div>
<div class="a" style="left:566px;top:147px;width:1px;height:19px;background:#a6a6a6;"></div>
<div class="a" style="left:567px;top:147px;width:1px;height:19px;background:#fafafa;"></div>
<div class="a" style="left:710px;top:147px;width:1px;height:19px;background:#a6a6a6;"></div>
<div class="a" style="left:711px;top:147px;width:1px;height:19px;background:#fafafa;"></div>
<div class="a" style="left:750px;top:147px;width:1px;height:19px;background:#a6a6a6;"></div>
<div class="a" style="left:751px;top:147px;width:1px;height:19px;background:#fafafa;"></div>
<div class="t" style="left:360px;top:150px;color:#333;">Name</div>
<div class="t" style="left:517px;top:150px;color:#333;">Size</div>
<div class="t" style="left:571px;top:150px;color:#333;">Modified</div>
<div class="t" style="left:715px;top:150px;color:#333;">Alg...</div>
<div class="t" style="left:755px;top:150px;color:#333;">Hash Value</div>
<div class="a" style="left:513px;top:167px;width:436px;height:20px;background:#dcdcdc;"></div>
<svg class="a" style="left:345px;top:173px" width="6" height="9" viewBox="0 0 6 9"><path d="M0.6 0.6 L4.6 4.5 L0.6 8.4Z" fill="#6e6e6e"/></svg>
<div class="a" style="left:356px;top:187px;width:593px;height:1px;background:#d9d9d9;"></div>
<div class="a" style="left:512px;top:167px;width:1px;height:20px;background:#d9d9d9;"></div>
<div class="a" style="left:566px;top:167px;width:1px;height:20px;background:#d9d9d9;"></div>
<div class="a" style="left:710px;top:167px;width:1px;height:20px;background:#d9d9d9;"></div>
<div class="a" style="left:750px;top:167px;width:1px;height:20px;background:#d9d9d9;"></div>
<div class="t" style="left:360px;top:171px;">E:\My Folder\Compressed.zip</div>
<div class="t" style="left:517px;top:171px;">112 KB</div>
<div class="t" style="left:571px;top:171px;">2016-04-20 6:16:36 PM</div>
<div class="t" style="left:715px;top:171px;">MD5</div>
<div class="t" style="left:755px;top:171px;">4fc2d0050ee8812735236327c48c9fea</div>
<div class="a" style="left:356px;top:208px;width:593px;height:1px;background:#d9d9d9;"></div>
<div class="a" style="left:512px;top:188px;width:1px;height:20px;background:#d9d9d9;"></div>
<div class="a" style="left:566px;top:188px;width:1px;height:20px;background:#d9d9d9;"></div>
<div class="a" style="left:710px;top:188px;width:1px;height:20px;background:#d9d9d9;"></div>
<div class="a" style="left:750px;top:188px;width:1px;height:20px;background:#d9d9d9;"></div>
<div class="t" style="left:360px;top:192px;">E:\My Folder\Encrypted.zip</div>
<div class="t" style="left:517px;top:192px;">111 KB</div>
<div class="t" style="left:571px;top:192px;">2016-04-20 6:20:09 PM</div>
<div class="t" style="left:715px;top:192px;">MD5</div>
<div class="t" style="left:755px;top:192px;">0528d34b84189bd2ab3a143cead5e9ab</div>
<div class="a" style="left:356px;top:229px;width:593px;height:1px;background:#d9d9d9;"></div>
<div class="a" style="left:512px;top:209px;width:1px;height:20px;background:#d9d9d9;"></div>
<div class="a" style="left:566px;top:209px;width:1px;height:20px;background:#d9d9d9;"></div>
<div class="a" style="left:710px;top:209px;width:1px;height:20px;background:#d9d9d9;"></div>
<div class="a" style="left:750px;top:209px;width:1px;height:20px;background:#d9d9d9;"></div>
<div class="t" style="left:360px;top:213px;">E:\My Folder\ExecutableIns...</div>
<div class="t" style="left:517px;top:213px;">22528 KB</div>
<div class="t" style="left:571px;top:213px;">2016-01-22 11:15:38 PM</div>
<div class="t" style="left:715px;top:213px;">MD5</div>
<div class="t" style="left:755px;top:213px;">a70a054889ec73358acf7a3b78e53107</div>
<div class="a" style="left:356px;top:250px;width:593px;height:1px;background:#d9d9d9;"></div>
<div class="a" style="left:512px;top:230px;width:1px;height:20px;background:#d9d9d9;"></div>
<div class="a" style="left:566px;top:230px;width:1px;height:20px;background:#d9d9d9;"></div>
<div class="a" style="left:710px;top:230px;width:1px;height:20px;background:#d9d9d9;"></div>
<div class="a" style="left:750px;top:230px;width:1px;height:20px;background:#d9d9d9;"></div>
<div class="t" style="left:360px;top:234px;">E:\My Folder\file1</div>
<div class="t" style="left:517px;top:234px;">641 KB</div>
<div class="t" style="left:571px;top:234px;">2016-04-20 10:59:26 PM</div>
<div class="t" style="left:715px;top:234px;">MD5</div>
<div class="t" style="left:755px;top:234px;">ef0cc09bdf9c304801db047c83b2a65b</div>
<div class="a" style="left:356px;top:271px;width:593px;height:1px;background:#d9d9d9;"></div>
<div class="a" style="left:512px;top:251px;width:1px;height:20px;background:#d9d9d9;"></div>
<div class="a" style="left:566px;top:251px;width:1px;height:20px;background:#d9d9d9;"></div>
<div class="a" style="left:710px;top:251px;width:1px;height:20px;background:#d9d9d9;"></div>
<div class="a" style="left:750px;top:251px;width:1px;height:20px;background:#d9d9d9;"></div>
<div class="t" style="left:360px;top:255px;">E:\My Folder\file10.pdf</div>
<div class="t" style="left:517px;top:255px;">3730 KB</div>
<div class="t" style="left:571px;top:255px;">2016-04-20 11:24:31 PM</div>
<div class="t" style="left:715px;top:255px;">MD5</div>
<div class="t" style="left:755px;top:255px;">59b362ddc305ffb692cc9490c51de20e</div>
<div class="a" style="left:356px;top:292px;width:593px;height:1px;background:#d9d9d9;"></div>
<div class="a" style="left:512px;top:272px;width:1px;height:20px;background:#d9d9d9;"></div>
<div class="a" style="left:566px;top:272px;width:1px;height:20px;background:#d9d9d9;"></div>
<div class="a" style="left:710px;top:272px;width:1px;height:20px;background:#d9d9d9;"></div>
<div class="a" style="left:750px;top:272px;width:1px;height:20px;background:#d9d9d9;"></div>
<div class="t" style="left:360px;top:276px;">E:\My Folder\file2</div>
<div class="t" style="left:517px;top:276px;">3267 KB</div>
<div class="t" style="left:571px;top:276px;">2016-04-20 11:00:12 PM</div>
<div class="t" style="left:715px;top:276px;">MD5</div>
<div class="t" style="left:755px;top:276px;">c3f9f7a9e80c9d7accd7f71b87d82f65</div>
<div class="a" style="left:356px;top:313px;width:593px;height:1px;background:#d9d9d9;"></div>
<div class="a" style="left:512px;top:293px;width:1px;height:20px;background:#d9d9d9;"></div>
<div class="a" style="left:566px;top:293px;width:1px;height:20px;background:#d9d9d9;"></div>
<div class="a" style="left:710px;top:293px;width:1px;height:20px;background:#d9d9d9;"></div>
<div class="a" style="left:750px;top:293px;width:1px;height:20px;background:#d9d9d9;"></div>
<div class="t" style="left:360px;top:297px;">E:\My Folder\file3</div>
<div class="t" style="left:517px;top:297px;">172 KB</div>
<div class="t" style="left:571px;top:297px;">2016-04-20 11:00:33 PM</div>
<div class="t" style="left:715px;top:297px;">MD5</div>
<div class="t" style="left:755px;top:297px;">79a3bc7424d4ef623940a852d73f1bdf</div>
<div class="a" style="left:356px;top:334px;width:593px;height:1px;background:#d9d9d9;"></div>
<div class="a" style="left:512px;top:314px;width:1px;height:20px;background:#d9d9d9;"></div>
<div class="a" style="left:566px;top:314px;width:1px;height:20px;background:#d9d9d9;"></div>
<div class="a" style="left:710px;top:314px;width:1px;height:20px;background:#d9d9d9;"></div>
<div class="a" style="left:750px;top:314px;width:1px;height:20px;background:#d9d9d9;"></div>
<div class="t" style="left:360px;top:318px;">E:\My Folder\file4</div>
<div class="t" style="left:517px;top:318px;">1910 KB</div>
<div class="t" style="left:571px;top:318px;">2016-04-20 11:00:46 PM</div>
<div class="t" style="left:715px;top:318px;">MD5</div>
<div class="t" style="left:755px;top:318px;">ff61b9d0006972cf8a211ce56f53b78c</div>
<div class="a" style="left:356px;top:355px;width:593px;height:1px;background:#d9d9d9;"></div>
<div class="a" style="left:512px;top:335px;width:1px;height:20px;background:#d9d9d9;"></div>
<div class="a" style="left:566px;top:335px;width:1px;height:20px;background:#d9d9d9;"></div>
<div class="a" style="left:710px;top:335px;width:1px;height:20px;background:#d9d9d9;"></div>
<div class="a" style="left:750px;top:335px;width:1px;height:20px;background:#d9d9d9;"></div>
<div class="t" style="left:360px;top:339px;">E:\My Folder\file5</div>
<div class="t" style="left:517px;top:339px;">641 KB</div>
<div class="t" style="left:571px;top:339px;">2016-04-20 11:01:02 PM</div>
<div class="t" style="left:715px;top:339px;">MD5</div>
<div class="t" style="left:755px;top:339px;">6f6d84895f4c36c26321911333a8bbb4</div>
<div class="a" style="left:356px;top:376px;width:593px;height:1px;background:#d9d9d9;"></div>
<div class="a" style="left:512px;top:356px;width:1px;height:20px;background:#d9d9d9;"></div>
<div class="a" style="left:566px;top:356px;width:1px;height:20px;background:#d9d9d9;"></div>
<div class="a" style="left:710px;top:356px;width:1px;height:20px;background:#d9d9d9;"></div>
<div class="a" style="left:750px;top:356px;width:1px;height:20px;background:#d9d9d9;"></div>
<div class="t" style="left:360px;top:360px;">E:\My Folder\file6</div>
<div class="t" style="left:517px;top:360px;">1499 KB</div>
<div class="t" style="left:571px;top:360px;">2016-04-20 11:02:18 PM</div>
<div class="t" style="left:715px;top:360px;">MD5</div>
<div class="t" style="left:755px;top:360px;">c25f02757ea9082205fbf10fc6c46df5</div>
<div class="a" style="left:356px;top:397px;width:593px;height:1px;background:#d9d9d9;"></div>
<div class="a" style="left:512px;top:377px;width:1px;height:20px;background:#d9d9d9;"></div>
<div class="a" style="left:566px;top:377px;width:1px;height:20px;background:#d9d9d9;"></div>
<div class="a" style="left:710px;top:377px;width:1px;height:20px;background:#d9d9d9;"></div>
<div class="a" style="left:750px;top:377px;width:1px;height:20px;background:#d9d9d9;"></div>
<div class="t" style="left:360px;top:381px;">E:\My Folder\file7</div>
<div class="t" style="left:517px;top:381px;">6323 KB</div>
<div class="t" style="left:571px;top:381px;">2016-04-20 11:02:50 PM</div>
<div class="t" style="left:715px;top:381px;">MD5</div>
<div class="t" style="left:755px;top:381px;">3db4ab069bae8ebc73144881d2067906</div>
<div class="a" style="left:356px;top:418px;width:593px;height:1px;background:#d9d9d9;"></div>
<div class="a" style="left:512px;top:398px;width:1px;height:20px;background:#d9d9d9;"></div>
<div class="a" style="left:566px;top:398px;width:1px;height:20px;background:#d9d9d9;"></div>
<div class="a" style="left:710px;top:398px;width:1px;height:20px;background:#d9d9d9;"></div>
<div class="a" style="left:750px;top:398px;width:1px;height:20px;background:#d9d9d9;"></div>
<div class="t" style="left:360px;top:402px;">E:\My Folder\file8</div>
<div class="t" style="left:517px;top:402px;">0 KB</div>
<div class="t" style="left:571px;top:402px;">2016-04-20 11:24:03 PM</div>
<div class="t" style="left:715px;top:402px;">MD5</div>
<div class="t" style="left:755px;top:402px;">cf163ff8f5231a844a5d982478ecff8e</div>
<div class="a" style="left:356px;top:439px;width:593px;height:1px;background:#d9d9d9;"></div>
<div class="a" style="left:512px;top:419px;width:1px;height:20px;background:#d9d9d9;"></div>
<div class="a" style="left:566px;top:419px;width:1px;height:20px;background:#d9d9d9;"></div>
<div class="a" style="left:710px;top:419px;width:1px;height:20px;background:#d9d9d9;"></div>
<div class="a" style="left:750px;top:419px;width:1px;height:20px;background:#d9d9d9;"></div>
<div class="t" style="left:360px;top:423px;">E:\My Folder\file9</div>
<div class="t" style="left:517px;top:423px;">3645 KB</div>
<div class="t" style="left:571px;top:423px;">2016-04-20 11:24:16 PM</div>
<div class="t" style="left:715px;top:423px;">MD5</div>
<div class="t" style="left:755px;top:423px;">5a4e4c5f2acf2366f22b75d3e481f331</div>
<div class="a" style="left:337px;top:626px;width:612px;height:1px;background:#9d9d9d;"></div>
<div class="a" style="left:337px;top:627px;width:612px;height:30px;background:#f0f0f0;"></div>
<div class="a" style="left:357px;top:630px;width:155px;height:24px;background:#ffffff;border:1px solid #a8a8a8"></div>
<div class="t" style="left:306px;top:636px;width:200px;text-align:right;">13</div>
<div class="a" style="left:1px;top:658px;width:949px;height:21px;background:#f0f0f0;"></div>
<div class="a" style="left:1px;top:658px;width:949px;height:1px;background:#b8b8b8;"></div>
<div class="a" style="left:0px;top:658px;width:1px;height:21px;background:#1a73c8;"></div>
<div class="a" style="left:950px;top:658px;width:1px;height:21px;background:#1a73c8;"></div>
<div class="a" style="left:0px;top:679px;width:951px;height:1px;background:#3c3c3c;"></div>
<div class="t" style="left:7px;top:663px;color:#333;">E:\My Folder</div>
<div class="t" style="left:723px;top:663px;width:200px;text-align:right;color:#333;">Ready.</div>
<div class="a" style="left:947px;top:669px;width:2px;height:2px;background:#505050;"></div>
<div class="a" style="left:944px;top:672px;width:2px;height:2px;background:#505050;"></div>
<div class="a" style="left:947px;top:672px;width:2px;height:2px;background:#505050;"></div>
<div class="a" style="left:941px;top:675px;width:2px;height:2px;background:#505050;"></div>
<div class="a" style="left:944px;top:675px;width:2px;height:2px;background:#505050;"></div>
<div class="a" style="left:947px;top:675px;width:2px;height:2px;background:#505050;"></div>
</body></html>
